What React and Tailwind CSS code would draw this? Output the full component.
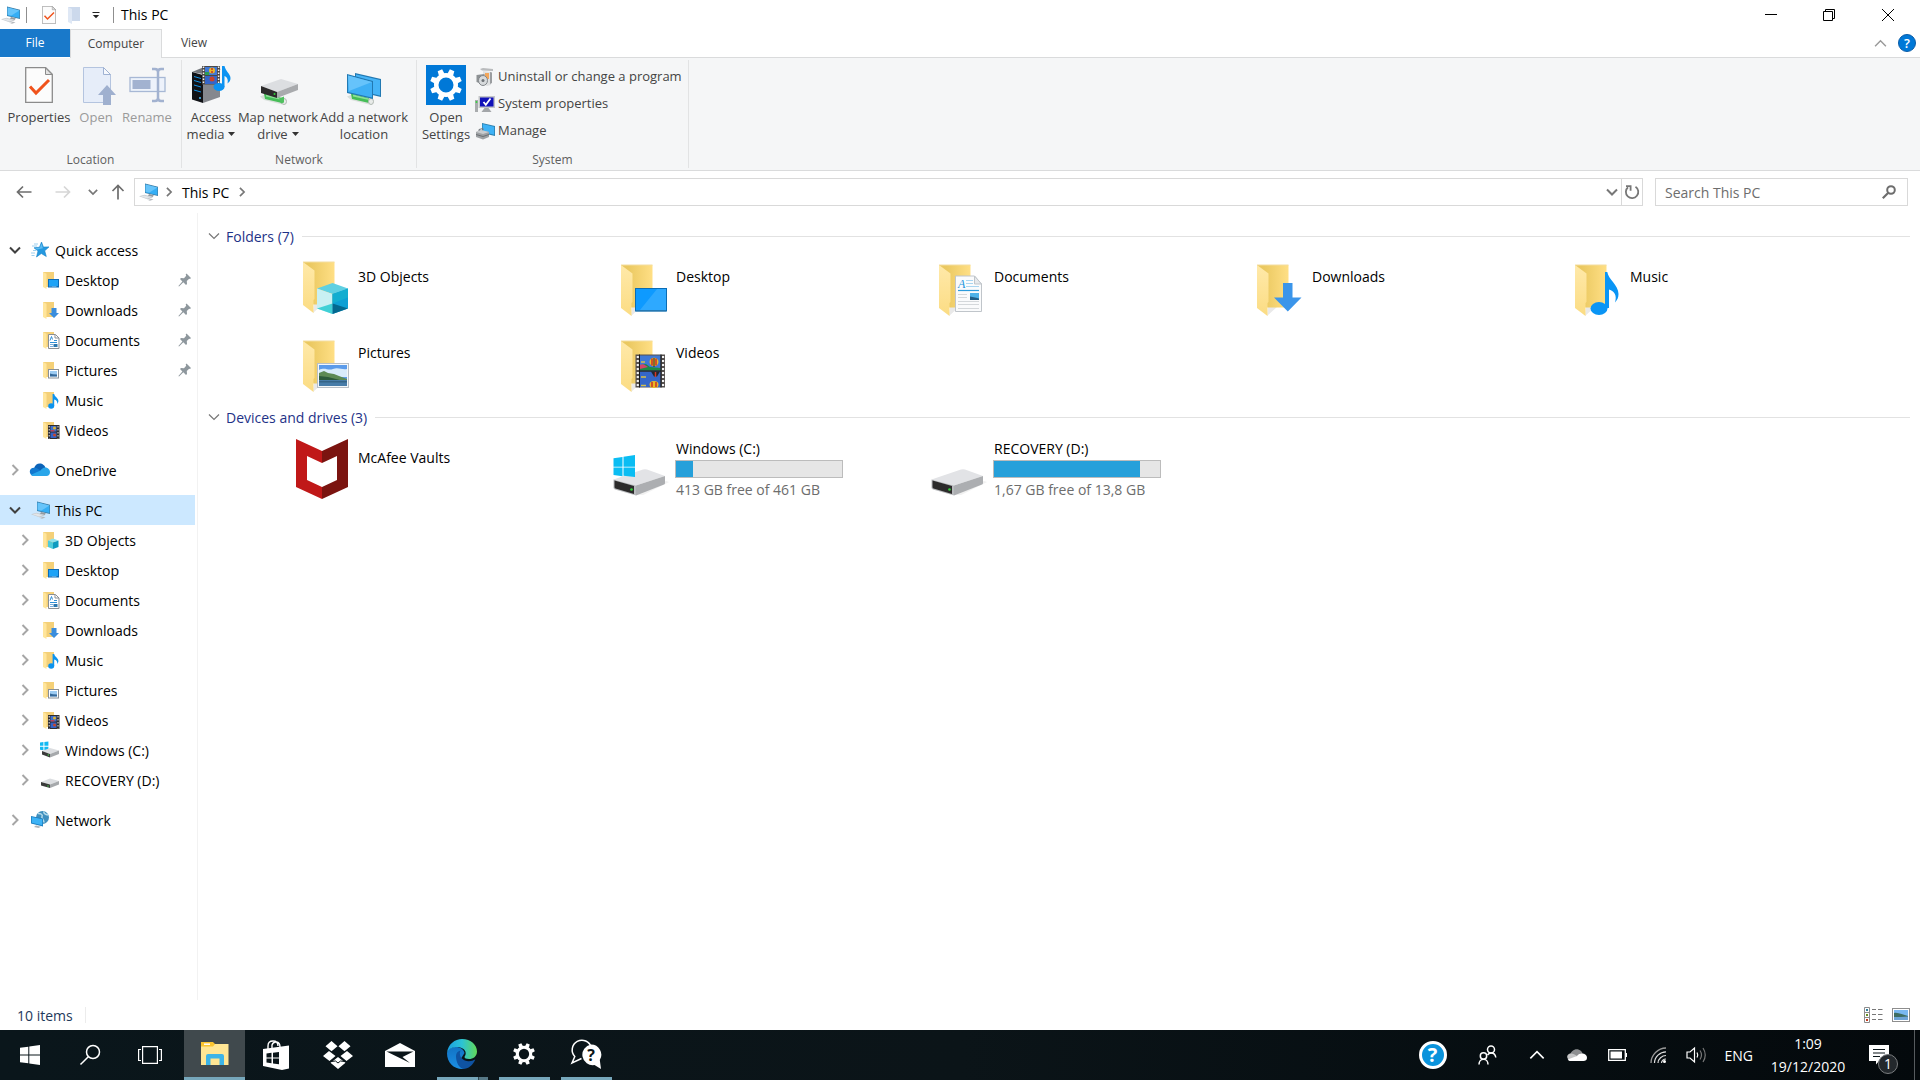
import React from "react";

/* ---------- shared drawings ---------- */

function Chevron({ dir = "down", size = 12, color = "#444", width = 2 }) {
  const d = {
    down: "M1 3.5l5 5 5-5",
    up: "M1 8.5l5-5 5 5",
    right: "M3.5 1l5 5-5 5",
  }[dir];
  return (
    <svg width={size} height={size} viewBox="0 0 12 12" fill="none" stroke={color} strokeWidth={width} aria-hidden="true">
      <path d={d} />
    </svg>
  );
}

function PcIcon() {
  return (
    <svg width="20" height="20" viewBox="0 0 20 20" aria-hidden="true">
      <path d="M7 1.500l13 3.200v9.300L7 11z" fill="#3c7da6" />
      <path d="M7.600 2.600l11.800 3v7.400L7.600 10.400z" fill="#35aef5" />
      <path d="M7.600 2.600l11.800 3-8 5-3.800-.9z" fill="#66c4fa" />
      <path d="M11.500 12l4.500 1.400-1.500 1.600-5-1.500z" fill="#949a9f" />
      <path d="M1 14.200l5.500-1.400 8.500 2.400-5 2.300z" fill="#c5cacf" />
      <path d="M2.500 14.300l4-.9 6 1.800-3.500 1.200z" fill="#e3e6e9" />
      <path d="M10 18l3.200-1.200 2.300.7-3.500 1.300z" fill="#b4b9be" />
    </svg>
  );
}

function SmallFolder({ children }) {
  return (
    <svg width="20" height="20" viewBox="0 0 20 20" aria-hidden="true">
      <path d="M3 2h11v15H5z" fill="#f4d078" />
      <path d="M3 2l3.500 1.800V19L3 17z" fill="#ffe59b" />
      {children}
    </svg>
  );
}

const small = {
  desktop: (
    <SmallFolder>
      <rect x="8" y="9" width="11" height="8.500" fill="#0b6bb8" />
      <rect x="9" y="10" width="9" height="6" fill="#1ea3f7" />
      <path d="M9.500 16.700h1M11.500 16.700h5" stroke="#9ad4fb" strokeWidth=".7" />
    </SmallFolder>
  ),
  downloads: (
    <SmallFolder>
      <path d="M11.500 8h5v5h2.500l-5 5-5-5h2.500z" fill="#3a8ddd" />
    </SmallFolder>
  ),
  documents: (
    <SmallFolder>
      <path d="M8.500 4.500h7l3.500 3.500v10.500H8.500z" fill="#fff" stroke="#8a8f93" />
      <path d="M15 4.500v3.500h4" fill="none" stroke="#8a8f93" />
      <path d="M10 10.500l1.500-4 1 3M10 12.500h7M14 10.500h3" stroke="#2f8fd6" fill="none" />
      <path d="M10 14.500h3M10 16.500h3" stroke="#79aede" />
      <rect x="13.500" y="14" width="4" height="3" fill="#2c77ad" />
    </SmallFolder>
  ),
  pictures: (
    <SmallFolder>
      <rect x="8.500" y="9.500" width="10" height="8.500" fill="#fff" stroke="#8a9197" />
      <rect x="10" y="11" width="7" height="5.500" fill="#9ccbf2" />
      <path d="M10 13.500l3 .8 4 .2v2h-7z" fill="#35699a" />
    </SmallFolder>
  ),
  music: (
    <SmallFolder>
      <ellipse cx="11.200" cy="16" rx="3" ry="2.700" fill="#0c93ee" />
      <path d="M12.600 4h1.600c.4 3 4.600 4 4.200 7.500-.2 1-.5 1.700-1.200 2.500.5-2.500-.8-4-3-4.500V16h-1.600z" fill="#0c93ee" />
    </SmallFolder>
  ),
  videos: (
    <SmallFolder>
      <rect x="8" y="5" width="11.500" height="14" fill="#2e2c2d" />
      <rect x="10.500" y="6" width="6" height="5.500" fill="#3d6fd0" />
      <rect x="10.500" y="12.500" width="6" height="5.500" fill="#3562c4" />
      <path d="M9.200 6v12.500M18 6v12.500" stroke="#e5e5e5" strokeDasharray="1.500 1.500" />
      <circle cx="14.500" cy="8" r="1.500" fill="#e3b52b" />
      <circle cx="14.500" cy="15" r="1.500" fill="#c8452b" />
      <path d="M10.500 10h4v1.500h-4z" fill="#b5465a" />
    </SmallFolder>
  ),
  objects: (
    <SmallFolder>
      <path d="M8 10.500l5-2 5.500 2-5.500 2z" fill="#8fe2ec" />
      <path d="M8 10.500l5 2v6.500l-5-2z" fill="#4fcbd9" />
      <path d="M18.500 10.500l-5.500 2v6.500l5.500-2z" fill="#0f9bc0" />
    </SmallFolder>
  ),
  driveC: (
    <svg width="20" height="20" viewBox="0 0 20 20" aria-hidden="true">
      <path d="M0 2.600l3.400-.5v3.600H0zM4.400 2l4-.6v4.300h-4zM0 6.700h3.400v3.500L0 9.700zM4.400 6.700h4v4.100l-4-.5z" fill="#14b9f2" />
      <path d="M2 11l8-3 9 2.500-9 3.500z" fill="#dcdee1" />
      <path d="M2 11l8 3v3.500l-8-3z" fill="#3a3a3a" />
      <path d="M10 14l9-3.500v3.500l-9 3.500z" fill="#a6a9ac" />
      <circle cx="8.300" cy="15" r=".7" fill="#41d646" />
    </svg>
  ),
  driveD: (
    <svg width="20" height="20" viewBox="0 0 20 20" aria-hidden="true">
      <path d="M1 12l9-3.500 9 2.500-9 3.500z" fill="#dcdee1" />
      <path d="M1 12l9 2.500V18l-9-2.500z" fill="#3a3a3a" />
      <path d="M10 14.500l9-3.500v3.500L10 18z" fill="#a6a9ac" />
      <circle cx="8" cy="16" r=".7" fill="#41d646" />
    </svg>
  ),
  star: (
    <svg width="20" height="20" viewBox="0 0 20 20" aria-hidden="true">
      <path d="M11.500 2l1.900 5 5.600-.1-4.300 3.900 1.600 5.700-5-3-4.800 3.500 1.500-5.900L4 7.800l5.500-.6z" fill="#2499e0" stroke="#1682c8" strokeWidth=".6" />
      <path d="M11.500 3.500l1.400 4.700-6 1.200-1.700-1.200 4.700-.4z" fill="#5cbcf2" />
      <path d="M4 4h4M2 6h5M3 10.500h3M1 13h4M1.500 15.500h3" stroke="#9ccfef" strokeWidth="1" />
    </svg>
  ),
  onedrive: (
    <svg width="22" height="20" viewBox="0 0 22 20" className="-ml-px" aria-hidden="true">
      <path d="M5 8.500C6 4 11 2 14.500 5c1.500 1 2 2.500 2.200 4L8 13z" fill="#0b63b8" />
      <path d="M1.500 14C-.5 10.500 2 7.500 5.500 7.800c2.500 0 4 1.500 6.500 3L5 16c-1.500 0-3-.8-3.500-2z" fill="#1279d0" />
      <path d="M16 7.500c2.500-.3 5 2 5 4.500S19.500 16 17.500 16H5c-1.200 0-2.300-.4-3-1.200l9.500-4.300c1.300-1.800 2.600-2.700 4.500-3z" fill="#29a6ea" />
    </svg>
  ),
  network: (
    <svg width="20" height="20" viewBox="0 0 20 20" aria-hidden="true">
      <circle cx="12.500" cy="7.500" r="6.500" fill="#3f8fbe" />
      <path d="M8 3.500c3 0 5 1 4 3s2 3 2 6M14 1.500c-1 2 2 3 4 3.500" stroke="#b7dceb" strokeWidth="1.500" fill="none" />
      <path d="M1 6l12 2.500v8L1 13.500z" fill="#1d7fc0" />
      <path d="M1.800 7l10.400 2.200v6.100L1.800 12.800z" fill="#3db3f6" />
      <path d="M6 15.500l5 1.200-2.500 1.300-4.500-1z" fill="#aeb4b9" />
    </svg>
  ),
  pc: <PcIcon />,
};

/* ---------- large tile drawings ---------- */

function BigFolder({ children, top = 0 }) {
  return (
    <svg width="60" height="60" viewBox="0 0 60 60" aria-hidden="true">
      <defs>
        <linearGradient id="folder-back" x1="0" x2="1">
          <stop offset=".2" stopColor="#eac860" />
          <stop offset="1" stopColor="#ffdf85" />
        </linearGradient>
        <linearGradient id="folder-front" x1="0" x2="0" y1="0" y2="1">
          <stop offset="0" stopColor="#ffe9a9" />
          <stop offset="1" stopColor="#fbdc83" />
        </linearGradient>
      </defs>
      <g transform={`translate(0 ${top})`}>
        <path d="M18 58l1-9h9z" fill="#e9e9e9" />
        <path d="M8 7h31.500v42.500H18z" fill="url(#folder-back)" />
        <path d="M8 7l11.500 8.500V44l-1 1v13L8 50z" fill="url(#folder-front)" />
        <path d="M8 7h31.500" stroke="#f3dda0" />
      </g>
      {children}
    </svg>
  );
}

const big = {
  objects: (
    <BigFolder top={-3}>
      <path d="M22 30.500L37.500 25 53 30.500 37.500 36z" fill="#5fd0e2" />
      <path d="M22 30.500L37.500 36v20L22 50.500z" fill="#c9f0f3" />
      <path d="M53 30.500L37.500 36v20L53 50.500z" fill="#0d9fd4" />
      <path d="M22 50.500l15.500-5V56z" fill="#3fd0d6" />
      <path d="M53 50.500l-15.500-5V56z" fill="#03688f" />
      <path d="M37.500 36L53 30.500v9l-15.500 6z" fill="#12add0" />
    </BigFolder>
  ),
  desktop: (
    <BigFolder>
      <rect x="22" y="30" width="32" height="23.500" fill="#0a6cb4" />
      <rect x="23" y="31" width="30" height="21" fill="#0e9aff" />
      <path d="M44 31h9v21H27z" fill="#2ea9ff" />
      <path d="M23 53h30" stroke="#3f86b5" />
    </BigFolder>
  ),
  documents: (
    <BigFolder>
      <path d="M24.500 18h19l7 8v27.500h-26z" fill="#fafbfc" stroke="#c0c5ca" />
      <path d="M43.500 18v8h7z" fill="#e6e9ec" stroke="#c0c5ca" />
      <text x="27" y="30" fontFamily="Liberation Serif, serif" fontStyle="italic" fontSize="12" fill="#2194dc">A</text>
      <path d="M35 22.500h7M35 25.500h7M35 28.500h13" stroke="#a9d5f0" />
      <path d="M27 32.500h21" stroke="#2c9bdc" strokeWidth="1.200" />
      <path d="M27 36.500h9M27 39.500h9M27 43.500h21M27 46.500h21M27 50.500h21" stroke="#d4d8db" />
      <rect x="39" y="35" width="9" height="7" fill="#4fb2e8" />
      <path d="M39 38.500l5 1 4 1V42h-9z" fill="#215e86" />
    </BigFolder>
  ),
  downloads: (
    <BigFolder>
      <path d="M34 25H43.500V39.500h9L38.800 53.500 25 39.500h9z" fill="#3b95ea" />
    </BigFolder>
  ),
  music: (
    <BigFolder>
      <ellipse cx="32" cy="50.500" rx="8.500" ry="6.500" fill="#0a95f5" />
      <path d="M38.500 14h1.800c.8 7 11.200 13 11.200 22 0 3.500-1.200 6-3.500 8.500 2.200-7-.5-11.500-6-13V50H38V14z" fill="#0a95f5" />
    </BigFolder>
  ),
  pictures: (
    <BigFolder>
      <rect x="22.500" y="29.500" width="31" height="24" fill="#f4f7f9" stroke="#b8bfc5" />
      <rect x="24" y="31" width="28" height="21" fill="#5b9bea" />
      <path d="M24 36c6-3 9 1 14-1s9 1 14 0v8H24z" fill="#d9ecfb" />
      <path d="M24 39l5-2 4 2 6 1 5 2 8 3v1H24z" fill="#5d8a55" />
      <path d="M24 46h28v6H24z" fill="#477ca8" />
      <path d="M24 42l9 1 12 3H24z" fill="#2d5a3c" />
      <path d="M24 47h28v1.500H24z" fill="#356487" />
    </BigFolder>
  ),
  videos: (
    <BigFolder>
      <rect x="22.500" y="20.500" width="29.500" height="33" fill="#55504e" />
      <rect x="27" y="21.500" width="20.500" height="15" fill="#3f78d6" />
      <rect x="27" y="37.500" width="20.500" height="15.500" fill="#3566c9" />
      <path d="M24.800 22v31M50 22v31" stroke="#f2f2f2" strokeWidth="2.200" strokeDasharray="2 2" />
      <path d="M27 31l6-1 4 3 10.500 1v2.500H27z" fill="#1d8a45" />
      <path d="M27 31c3-2 5 0 8 2l-8 2z" fill="#d2446d" />
      <ellipse cx="41" cy="28" rx="4.500" ry="4.200" fill="#e9b824" />
      <path d="M39 24.500v7M43 24.500v7" stroke="#c92f27" strokeWidth="1.500" />
      <path d="M41 24v9" stroke="#22262f" />
      <path d="M38 37.500h9l-3 5h-3z" fill="#22262f" />
      <path d="M42.500 38v5" stroke="#d03a2b" strokeWidth="1.500" />
      <ellipse cx="41" cy="50.500" rx="4.500" ry="3.500" fill="#e9b824" />
      <path d="M39 48v5M43 48v5" stroke="#c92f27" strokeWidth="1.500" />
      <path d="M28 28h4M28 43h5M28 51.500h5" stroke="#d6c04b" strokeWidth="1.500" />
      <path d="M26.500 20.500v33M48 20.500v33M27 37h21" stroke="#17181a" />
    </BigFolder>
  ),
  mcafee: (
    <svg width="60" height="60" viewBox="0 0 60 60" aria-hidden="true">
      <path d="M2 0l26 12v12L13 17v24l15 7v12L2 48z" fill="#c01818" />
      <path d="M54 0L28 12v12l15-7v24l-15 7v12l26-12z" fill="#7b1410" />
    </svg>
  ),
  driveC: (
    <svg width="60" height="60" viewBox="0 0 60 60" aria-hidden="true">
      <BigDrive />
      <path d="M1.500 4.200l9-1.300v9.800h-9zM11.500 2.800L23 1v11.700H11.500zM1.500 13.500h9v8.700l-9-1.200zM11.500 13.500H23V23l-11.500-1.300z" transform="translate(0 15)" fill="#0abdf3" />
    </svg>
  ),
  driveD: (
    <svg width="60" height="60" viewBox="0 0 60 60" aria-hidden="true">
      <BigDrive />
    </svg>
  ),
};

function BigDrive() {
  return (
    <g>
      <path d="M24 56l30-14 3 1-26 13z" fill="#f1f1f1" />
      <path d="M1.500 40.500L31 30.500q2-.6 4 0L53 37 24 46.500z" fill="#e2e3e6" />
      <path d="M1.500 40.500L24 46.500v10l-21-6q-1.500-.5-1.500-2z" fill="#b9bbbe" />
      <path d="M2.500 41.500L22 47v8L3.500 49.500q-1-.4-1-1.500z" fill="#2c2b2b" />
      <path d="M24 46.500L53 37v7q0 1-1 1.500L24 56.500z" fill="#acaeb1" />
      <circle cx="19.500" cy="50.500" r="1.300" fill="#35d13c" />
    </g>
  );
}

/* ---------- ribbon drawings ---------- */

function PageCheck({ w, h }) {
  return (
    <svg width={w} height={h} viewBox="0 0 28 36" aria-hidden="true">
      <path d="M.7.700h20l6.600 6.600v28H.7z" fill="#fcfcfc" stroke="#8b8b8b" strokeWidth="1.300" />
      <path d="M20.500 1v6.500H27z" fill="#e3e3e3" stroke="#8b8b8b" />
      <path d="M5 19.500l6 6.500L24 13" fill="none" stroke="#f0531c" strokeWidth="3" />
    </svg>
  );
}

function NetPipe() {
  return (
    <g>
      <path d="M2 33.500l7-3 19 6-4 5-18-4.500z" fill="#d9dfdb" />
      <path d="M6 30.500l18 4.500v5L7 36z" fill="#45bd57" />
      <path d="M8 31.500l16 4v1.500L8 33.500z" fill="#8be096" />
      <ellipse cx="26" cy="38.500" rx="2.500" ry="3" fill="#e8ebe9" stroke="#b0b8b2" />
    </g>
  );
}

const ribbonIcons = {
  properties: <PageCheck w={28} h={36} />,
  open: (
    <svg width="40" height="40" viewBox="0 0 40 40" aria-hidden="true">
      <path d="M7.500 2.500h20l7 7v28h-27z" fill="#e6edf9" stroke="#b4c4df" />
      <path d="M27.500 2.500v7h7z" fill="#f7f9fd" stroke="#9fb2d3" />
      <path d="M31 20l9 10h-5v10h-8V30h-5z" fill="#9fb0cf" />
    </svg>
  ),
  rename: (
    <svg width="40" height="40" viewBox="0 0 40 40" aria-hidden="true">
      <rect x="3" y="12.500" width="35" height="14" fill="#edf2fb" stroke="#a7b8d5" strokeWidth="1.300" />
      <rect x="5.500" y="15" width="18" height="9" fill="#a2b2d0" />
      <path d="M25 4h3q3 0 3 3v26q0 3 3 3h3M37 4h-3q-3 0-3 3M25 36h3q3 0 3-3" fill="none" stroke="#a2b2d0" strokeWidth="2.500" />
    </svg>
  ),
  media: (
    <svg width="40" height="40" viewBox="0 0 40 40" aria-hidden="true">
      <path d="M1 7l12-5 17 2-13 6z" fill="#74777c" />
      <path d="M1 7l11 3v28L1 34.500z" fill="#101216" />
      <path d="M12 10l17-4v26l-17 6z" fill="#85888e" />
      <path d="M3 11.500l7 2M3 15.500l7 2M3 20l7 2M3 25l7 2" stroke="#1492e6" />
      <circle cx="9" cy="33" r="1" fill="#4cc0ff" />
      <rect x="11" y="1" width="18" height="18.500" fill="#4b4847" />
      <rect x="14" y="2" width="12" height="8" fill="#3f78d6" />
      <rect x="14" y="11" width="12" height="8" fill="#3566c9" />
      <path d="M12.500 1.500v18M27.600 1.500v18" stroke="#f2f2f2" strokeWidth="1.500" strokeDasharray="1.500 1.500" />
      <circle cx="21" cy="5.500" r="3" fill="#e9b824" />
      <path d="M20 4h2M20 7h2" stroke="#c92f27" strokeWidth="1.500" />
      <circle cx="21" cy="14" r="2.500" fill="#c9432a" />
      <path d="M14 7h4v3h-4z" fill="#2b9d55" />
      <ellipse cx="28" cy="22" rx="5.500" ry="4" fill="#0c93f2" />
      <path d="M31 1h2.500c1 5 6 8 6 12 0 2.500-1 4-3 5.500 1-4-.5-6.500-3-7.500V22H31z" fill="#0c93f2" />
    </svg>
  ),
  drive: (
    <svg width="40" height="40" viewBox="0 0 40 40" aria-hidden="true">
      <g transform="translate(0 -2)"><NetPipe /></g>
      <path d="M3 21l20-7 17 5-21 8z" fill="#dcdee1" />
      <path d="M3 21l16 6v6L3 28z" fill="#2c2b2b" />
      <path d="M19 27l21-8v6l-21 8z" fill="#a9abae" />
      <circle cx="16.500" cy="29" r="1" fill="#35d13c" />
      <path d="M21 33.500l5-2v6l-3 1z" fill="#4fc05f" />
    </svg>
  ),
  location: (
    <svg width="40" height="40" viewBox="0 0 40 40" aria-hidden="true">
      <g transform="translate(1 -2)"><NetPipe /></g>
      <path d="M11 8l26 6v18L11 26z" fill="#2279b2" />
      <path d="M12 9.500l24 5.500v15.500L12 25z" fill="#46b4f7" />
      <path d="M3 9l26 7v18L3 28z" fill="#2279b2" />
      <path d="M4 10.500l24 6.400v15.600L4 27z" fill="#3eaff5" />
      <path d="M4 10.500l24 6.400L5 26z" fill="#66c3fb" />
    </svg>
  ),
};

function Gear({ size, color, inner }) {
  const teeth = [0, 45, 90, 135, 180, 225, 270, 315];
  return (
    <svg width={size} height={size} viewBox="0 0 32 32" aria-hidden="true">
      {teeth.map((a) => (
        <path key={a} d="M13 5l.6-5h4.800l.6 5z" fill={color} transform={`rotate(${a + 22.5} 16 16)`} />
      ))}
      <circle cx="16" cy="16" r={(12 + inner) / 2} fill="none" stroke={color} strokeWidth={12 - inner} />
    </svg>
  );
}

function UninstallIcon() {
  return (
    <svg width="20" height="20" viewBox="0 0 20 20" aria-hidden="true">
      <path d="M5 2l3-1 10 1v2L7 3.500z" fill="#b9bbbd" />
      <path d="M8 4l8 1v13l-4 1-4-2z" fill="#dfe1e2" />
      <path d="M15 5l2 .5V16l-2 1z" fill="#9a9da0" />
      <path d="M10 6h4v6h-4z" fill="#f3a65a" />
      <path d="M1.500 8l8-1v11l-8-3z" fill="#8d9194" />
      <ellipse cx="8" cy="13.500" rx="4.500" ry="5" fill="#d7dadc" stroke="#82878b" />
      <circle cx="8" cy="13.500" r="1.500" fill="#6d7276" />
    </svg>
  );
}

function SystemIcon() {
  return (
    <svg width="20" height="20" viewBox="0 0 20 20" aria-hidden="true">
      <path d="M0 6h3v12H0z" fill="#a9acae" />
      <circle cx="1.500" cy="8" r="1" fill="#36d33b" />
      <rect x="3.500" y="2" width="16.500" height="12" fill="#c3c5c8" />
      <rect x="5" y="3.500" width="13.500" height="9" fill="#1111b9" />
      <path d="M8.500 8l2.300 2.800L15.500 4.500" fill="none" stroke="#fff" strokeWidth="1.800" />
      <path d="M9.500 14h4l3 4h-10z" fill="#a3a6a9" />
    </svg>
  );
}

function ManageIcon() {
  return (
    <svg width="20" height="20" viewBox="0 0 20 20" aria-hidden="true">
      <path d="M7 2l13 3v10L7 12z" fill="#2b7fae" />
      <path d="M7.700 3l11.500 2.700v8.100L7.700 11z" fill="#3eb2f6" />
      <path d="M1 11l5-2 8 2v5l-6 2.500-7-2.500z" fill="#9da1a4" />
      <path d="M1 11l5-2 8 2-6 2z" fill="#c9cccf" />
      <path d="M4 10V8.500l4-1V9" fill="none" stroke="#70757a" />
      <path d="M1 13.500l7 2 6-2" fill="none" stroke="#6b6f73" />
    </svg>
  );
}

/* ---------- data ---------- */

const tree = [
  {
    label: "Quick access", icon: "star", open: true,
    items: [
      { label: "Desktop", icon: "desktop", pin: true },
      { label: "Downloads", icon: "downloads", pin: true },
      { label: "Documents", icon: "documents", pin: true },
      { label: "Pictures", icon: "pictures", pin: true },
      { label: "Music", icon: "music" },
      { label: "Videos", icon: "videos" },
    ],
  },
  { label: "OneDrive", icon: "onedrive", items: [] },
  {
    label: "This PC", icon: "pc", open: true, selected: true,
    items: [
      { label: "3D Objects", icon: "objects", expand: true },
      { label: "Desktop", icon: "desktop", expand: true },
      { label: "Documents", icon: "documents", expand: true },
      { label: "Downloads", icon: "downloads", expand: true },
      { label: "Music", icon: "music", expand: true },
      { label: "Pictures", icon: "pictures", expand: true },
      { label: "Videos", icon: "videos", expand: true },
      { label: "Windows (C:)", icon: "driveC", expand: true },
      { label: "RECOVERY (D:)", icon: "driveD", expand: true },
    ],
  },
  { label: "Network", icon: "network", items: [] },
];

const folders = [
  ["3D Objects", "objects"],
  ["Desktop", "desktop"],
  ["Documents", "documents"],
  ["Downloads", "downloads"],
  ["Music", "music"],
  ["Pictures", "pictures"],
  ["Videos", "videos"],
];

const drives = [
  { label: "Windows (C:)", icon: "driveC", used: 10, free: "413 GB free of 461 GB" },
  { label: "RECOVERY (D:)", icon: "driveD", used: 88, free: "1,67 GB free of 13,8 GB" },
];

/* ---------- window parts ---------- */

function TitleBar() {
  return (
    <header className="flex h-[29px] shrink-0 items-center">
      <PcIcon />
      <span className="ml-1.5 h-4 w-px bg-[#8f8f8f]" />
      <button aria-label="Properties" className="ml-[15px]"><PageCheck w={14} h={18} /></button>
      <button aria-label="New folder" className="ml-3">
        <svg width="12" height="18" viewBox="0 0 12 18" aria-hidden="true">
          <path d="M0 1h12v14H2z" fill="#ccd9ec" />
          <path d="M0 1l4 2v15l-4-2z" fill="#dfe8f5" />
        </svg>
      </button>
      <button aria-label="Customize Quick Access Toolbar" className="ml-3">
        <svg width="8" height="8" viewBox="0 0 8 8" aria-hidden="true">
          <path d="M.5 1.500h7" stroke="#222" />
          <path d="M.8 4h6.400L4 7.200z" fill="#222" />
        </svg>
      </button>
      <span className="ml-[13px] h-4 w-px bg-[#8f8f8f]" />
      <h1 className="ml-[7px] text-[14px] text-black">This PC</h1>
      <div className="ml-auto flex h-full pr-0.5">
        <button aria-label="Minimize" className="grid w-[58px] place-items-center">
          <svg width="12" height="12" viewBox="0 0 12 12" stroke="#000" aria-hidden="true"><path d="M0 5.500h12" /></svg>
        </button>
        <button aria-label="Restore" className="grid w-[58px] place-items-center">
          <svg width="12" height="12" viewBox="0 0 12 12" fill="none" stroke="#000" aria-hidden="true">
            <path d="M.5 2.500h9v9h-9zM2.500 2.500v-2h9v9h-2" />
          </svg>
        </button>
        <button aria-label="Close" className="grid w-[60px] place-items-center">
          <svg width="12" height="12" viewBox="0 0 12 12" stroke="#000" aria-hidden="true"><path d="M0 0l12 12M12 0L0 12" /></svg>
        </button>
      </div>
    </header>
  );
}

function Tabs() {
  return (
    <div className="flex h-[29px] shrink-0 text-[12px] text-[#444]">
      <button className="mb-px w-[70px] bg-[#1979ca] text-white">File</button>
      <button className="w-[92px] border border-b-0 border-[#dadbdc] bg-[#f5f6f7]">Computer</button>
      <button className="w-16 border-b border-[#dadbdc]">View</button>
      <div className="flex flex-1 items-center justify-end gap-[11px] border-b border-[#dadbdc] pr-1">
        <button aria-label="Minimize the Ribbon"><Chevron dir="up" size={13} color="#999" width={1.3} /></button>
        <button aria-label="Help" className="grid size-[18px] place-items-center rounded-full border border-[#0a5ca8] bg-[#0078d7] text-[13px] font-semibold leading-none text-white">?</button>
      </div>
    </div>
  );
}

function BigButton({ icon, lines, width, disabled, caret }) {
  return (
    <button disabled={disabled} className={`flex shrink-0 flex-col items-center pt-[5px] ${width} ${disabled ? "text-[#9a9a9a]" : "text-[#444]"}`}>
      <span className="flex h-10 items-center justify-center">{icon}</span>
      {lines.map((line, i) => (
        <span key={line} className={`flex items-center gap-1 whitespace-nowrap leading-[17px] ${i === 0 ? "mt-1" : ""}`}>
          {line}
          {caret && i === lines.length - 1 && (
            <svg width="7" height="5" viewBox="0 0 7 5" aria-hidden="true"><path d="M0 0h7L3.500 4z" fill="#333" /></svg>
          )}
        </span>
      ))}
    </button>
  );
}

function Group({ name, children, className }) {
  return (
    <section aria-label={name} className={`my-0.5 flex flex-col justify-between border-r border-[#e2e3e4] ${className}`}>
      <div className="flex pl-1">{children}</div>
      <div className="text-center text-[12px] leading-[17px] text-[#5f5f5f]">{name}</div>
    </section>
  );
}

function SmallButton({ icon, children }) {
  return (
    <button className="flex h-[27px] items-center gap-[3px] whitespace-nowrap">
      {icon}
      {children}
    </button>
  );
}

function Ribbon() {
  return (
    <div className="flex h-[113px] shrink-0 border-b border-[#dadbdc] bg-[#f5f6f7] text-[13px] text-[#444]">
      <Group name="Location" className="w-[182px]">
        <BigButton icon={ribbonIcons.properties} lines={["Properties"]} width="w-[70px]" />
        <BigButton icon={ribbonIcons.open} lines={["Open"]} width="w-[44px]" disabled />
        <BigButton icon={ribbonIcons.rename} lines={["Rename"]} width="w-[58px]" disabled />
      </Group>
      <Group name="Network" className="w-[235px]">
        <BigButton icon={ribbonIcons.media} lines={["Access", "media"]} width="w-[50px]" caret />
        <BigButton icon={ribbonIcons.drive} lines={["Map network", "drive"]} width="w-[84px]" caret />
        <BigButton icon={ribbonIcons.location} lines={["Add a network", "location"]} width="w-[88px]" />
      </Group>
      <Group name="System" className="w-[272px]">
        <BigButton
          icon={<span className="grid size-10 place-items-center bg-[#0078d7]"><Gear size={32} color="#fff" inner={7.5} /></span>}
          lines={["Open", "Settings"]}
          width="w-[50px]"
        />
        <div className="flex flex-col pl-1 pt-[3px]">
          <SmallButton icon={<UninstallIcon />}>Uninstall or change a program</SmallButton>
          <SmallButton icon={<SystemIcon />}>System properties</SmallButton>
          <SmallButton icon={<ManageIcon />}>Manage</SmallButton>
        </div>
      </Group>
    </div>
  );
}

function Arrow({ color, rotate }) {
  return (
    <svg width="16" height="16" viewBox="0 0 16 16" fill="none" stroke={color} strokeWidth="1.700" className={rotate} aria-hidden="true">
      <path d="M15.500 8H1.500M7 2.500L1.500 8 7 13.500" />
    </svg>
  );
}

function AddressBar() {
  return (
    <div className="flex h-[42px] shrink-0 items-center pr-3">
      <nav aria-label="History" className="flex w-[134px] items-center pl-4">
        <button aria-label="Back"><Arrow color="#6d6d6d" /></button>
        <button aria-label="Forward" className="ml-[23px]" disabled><Arrow color="#d6d6d6" rotate="rotate-180" /></button>
        <button aria-label="Recent locations" className="ml-[17px]"><Chevron size={10} color="#777" width={2} /></button>
        <button aria-label="Up" className="ml-3"><Arrow color="#6d6d6d" rotate="rotate-90" /></button>
      </nav>
      <div className="flex h-7 flex-1 items-center border border-[#d9d9d9] pl-[3px] text-[14px] text-black">
        <PcIcon />
        <span className="ml-1.5"><Chevron dir="right" size={10} color="#777" width={2} /></span>
        <button className="ml-2">This PC</button>
        <span className="ml-2"><Chevron dir="right" size={10} color="#777" width={2} /></span>
        <button aria-label="Previous locations" className="ml-auto mr-[3px]"><Chevron color="#777" width={2} /></button>
        <button aria-label="Refresh" className="grid h-full w-[21px] place-items-center border-l border-[#d9d9d9]">
          <svg width="16" height="16" viewBox="0 0 16 16" fill="none" stroke="#777" strokeWidth="1.800" aria-hidden="true">
            <path d="M11.500 2.700A6.200 6.200 0 1 1 4 3.200" />
            <path d="M2 2.200h4.600v4.500" />
          </svg>
        </button>
      </div>
      <label className="ml-3 flex h-7 w-[253px] items-center border border-[#d9d9d9] pl-[9px] pr-[11px]">
        <input aria-label="Search This PC" placeholder="Search This PC" className="min-w-0 flex-1 bg-transparent text-[14px] outline-none placeholder:text-[#6d6d6d]" />
        <svg width="14" height="14" viewBox="0 0 14 14" fill="none" stroke="#6d6d6d" aria-hidden="true">
          <circle cx="9" cy="5" r="3.800" strokeWidth="2" />
          <path d="M6.300 7.700L.8 13.200" strokeWidth="2.200" />
        </svg>
      </label>
    </div>
  );
}

function Pin() {
  return (
    <svg width="14" height="14" viewBox="0 0 14 14" className="ml-auto mr-[3px]" aria-hidden="true">
      <path d="M8.500.500l4.500 4.500-1 1-.8-.3-2.400 2.400.2 2.900-1 1-2.700-2.700L1 13.600l-.6-.6 4-4.500L2 6l1-1 3 .2L8.200 2.800 7.700 1.500z" fill="#8e979d" />
    </svg>
  );
}

function TreeRow({ node, level }) {
  const expandable = level === 0 || node.expand;
  return (
    <button
      className={`flex h-[30px] w-[195px] shrink-0 items-center text-left ${level ? "pl-[10px]" : ""} ${node.selected ? "bg-[#cce8ff]" : ""}`}
    >
      <span className="grid w-[30px] place-items-center">
        {expandable && (node.open ? <Chevron size={12} color="#404040" width={2} /> : <Chevron dir="right" size={12} color="#a6a6a6" width={2} />)}
      </span>
      <span className="w-5">{small[node.icon]}</span>
      <span className="ml-[5px]">{node.label}</span>
      {node.pin && <Pin />}
    </button>
  );
}

function NavPane() {
  return (
    <aside className="flex w-[198px] shrink-0 flex-col gap-2.5 border-r border-[#f2f2f2] pt-[22px] text-[14px] text-black">
      {tree.map((node) => (
        <div key={node.label} className="flex flex-col">
          <TreeRow node={node} level={0} />
          {node.items.map((item) => (
            <TreeRow key={item.label} node={item} level={1} />
          ))}
        </div>
      ))}
    </aside>
  );
}

function SectionHeader({ children }) {
  return (
    <h2 className="flex h-6 items-center text-[14px] text-[#1e3287]">
      <Chevron size={12} color="#777" width={1.2} />
      <span className="ml-1.5">{children}</span>
      <span className="ml-2 h-px flex-1 bg-[#e2e2e2]" />
    </h2>
  );
}

function Content() {
  return (
    <main className="min-w-0 flex-1 pl-2.5 pr-2.5 pt-[11px] text-[14px] text-black">
      <SectionHeader>Folders (7)</SectionHeader>
      <div className="grid grid-cols-[repeat(auto-fill,318px)] pl-20 pt-px">
        {folders.map(([label, icon]) => (
          <button key={label} className="flex h-[76px] pl-[7px] pt-[9px] text-left">
            {big[icon]}
            <span className="ml-[3px] mt-[9px] leading-5">{label}</span>
          </button>
        ))}
      </div>
      <div className="mt-1">
        <SectionHeader>Devices and drives (3)</SectionHeader>
      </div>
      <div className="grid grid-cols-[repeat(auto-fill,318px)] pl-20 pt-[10px]">
        <button className="flex pl-1.5 text-left">
          {big.mcafee}
          <span className="ml-1 mt-[9px] leading-5">McAfee Vaults</span>
        </button>
        {drives.map((d) => (
          <button key={d.label} className="flex pl-1.5 text-left">
            {big[d.icon]}
            <span className="ml-[3px] flex flex-col">
              <span className="pl-px leading-5">{d.label}</span>
              <span
                role="progressbar"
                aria-label={`${d.label} used space`}
                aria-valuenow={d.used}
                className="mt-px flex h-[18px] w-[168px] border border-[#bcbcbc] bg-[#e6e6e6]"
              >
                <span className="bg-[#26a0da]" style={{ width: `${d.used}%` }} />
              </span>
              <span className="mt-0.5 pl-px leading-5 text-[#6d6d6d]">{d.free}</span>
            </span>
          </button>
        ))}
      </div>
    </main>
  );
}

function StatusBar() {
  return (
    <footer className="flex h-[30px] shrink-0 items-center pl-[17px] pr-2.5 text-[14px] text-[#1e395b]">
      <span>10 items</span>
      <span className="ml-3 h-4 w-px bg-[#ececec]" />
      <button aria-label="Details view" className="ml-auto">
        <svg width="19" height="16" viewBox="0 0 19 16" aria-hidden="true">
          <path d="M.5.500h5v15h-5zM.5 5.500h5M.5 10.500h5" fill="none" stroke="#8d8d8d" />
          <path d="M8 2.500h4M14 2.500h4.500M8 7.500h4M14 7.500h4.500M8 12.500h4M14 12.500h4.500" stroke="#777" />
          <path d="M2 2h2v2H2z" fill="#2f7f9d" />
          <path d="M2 7h2v2H2z" fill="#6a8f25" />
          <path d="M2 12h2v2H2z" fill="#c23a1e" />
        </svg>
      </button>
      <button aria-label="Large icons view" className="ml-[9px]">
        <svg width="18" height="14" viewBox="0 0 18 14" aria-hidden="true">
          <rect x=".5" y=".5" width="17" height="13" fill="#fff" stroke="#8d8d8d" />
          <rect x="2" y="2" width="14" height="10" fill="#79b8f0" />
          <path d="M2 5c4-1 9 2 14 3v4H2z" fill="#3f6e62" />
          <path d="M2 9c5 0 9 0 14-.5V12H2z" fill="#6ea4d6" />
        </svg>
      </button>
    </footer>
  );
}

/* ---------- taskbar ---------- */

const taskIcons = {
  start: (
    <svg width="20" height="20" viewBox="0 0 20 20" fill="#fff" aria-hidden="true">
      <path d="M0 2.800l8.300-1.100v7.800H0zM9.300 1.500L20 0v9.500H9.300zM0 10.500h8.300v7.800L0 17.200zM9.300 10.500H20V20L9.300 18.500z" />
    </svg>
  ),
  search: (
    <svg width="22" height="22" viewBox="0 0 22 22" fill="none" stroke="#fff" strokeWidth="1.500" aria-hidden="true">
      <circle cx="14" cy="8" r="6.500" />
      <path d="M9.300 12.700L1.500 20.500" />
    </svg>
  ),
  taskview: (
    <svg width="24" height="20" viewBox="0 0 24 20" fill="none" stroke="#fff" strokeWidth="1.200" aria-hidden="true">
      <path d="M4.600 1.600h14.800v16.800H4.600zM3 4.500H.6v11H3M21 4.500h2.400v11H21" />
    </svg>
  ),
  explorer: (
    <svg width="28" height="24" viewBox="0 0 28 24" aria-hidden="true">
      <path d="M0 0h12l2 2v4H0z" fill="#fbc42f" />
      <path d="M0 4.500h12l2-2.500h13.500v21H0z" fill="#ffe694" />
      <path d="M3 2.200h6" stroke="#fff" strokeWidth="1.500" />
      <path d="M5 23v-9q0-2 2-2h14q2 0 2 2v9h-4.500v-6.500h-9V23z" fill="#3db4e7" />
    </svg>
  ),
  store: (
    <svg width="28" height="30" viewBox="0 0 28 30" aria-hidden="true">
      <path d="M6 9V6q0-5 5-5t5 5M10 8V5q1-3.500 4.500-3T18 7" fill="none" stroke="#fff" strokeWidth="1.400" />
      <path d="M1 9l26-3.500v23L20 30 1 26z" fill="#fff" />
      <path d="M4.500 13.500l5-.7v4.700h-5zM11 12.700l6-.8v5.600h-6zM4.500 18.500h5v4.700l-5-.7zM11 18.500h6v5.700l-6-.8z" fill="#0a1519" />
    </svg>
  ),
  dropbox: (
    <svg width="30" height="28" viewBox="0 0 30 28" fill="#fff" aria-hidden="true">
      <path d="M8.500 0l6 5.200-6 5-6-5zM21.500 0l6 5.200-6 5-6-5zM6 10l6.500 5L6.500 20 0 15zM24 10l-6.500 5 6 5 6.500-5zM7.500 21.800l1.800-1.300L15 16l5.700 4.500 1.800 1.300L15 28z" />
      <path d="M8 20.500l4.500-.500 2.500 2 2.500-2 4.500.5" fill="none" stroke="#0a1519" />
    </svg>
  ),
  mail: (
    <svg width="30" height="24" viewBox="0 0 30 24" aria-hidden="true">
      <path d="M0 8L15 0l15 8v16H0z" fill="#fff" />
      <path d="M1.500 8.500h27l-11 5.500 7.500 6z" fill="#0a1519" />
    </svg>
  ),
  edge: (
    <svg width="30" height="30" viewBox="0 0 30 30" aria-hidden="true">
      <defs>
        <linearGradient id="edge-top" x1="0" x2="1">
          <stop offset="0" stopColor="#1a9fe0" />
          <stop offset=".5" stopColor="#2cc3d5" />
          <stop offset="1" stopColor="#62d957" />
        </linearGradient>
        <linearGradient id="edge-left" x1="0" x2="0" y1="0" y2="1">
          <stop offset="0" stopColor="#1273c4" />
          <stop offset="1" stopColor="#1b8fe4" />
        </linearGradient>
      </defs>
      <path d="M0 14c1-4 5-6.500 10-6 4 .4 7 3 7.500 6l-5 8 4 7.900C7 30.500 0 24 0 14z" fill="url(#edge-left)" />
      <path d="M9 17c0-3 2-5 4.500-5.500-2 4 .5 9.500 6.500 10.500 3.500.6 6-.5 8.300-1.500C26 26 21.500 30 16 30c-4-1.500-7-6.500-7-13z" fill="#0f53a2" />
      <path d="M0 14C1 5 8 0 15 0c9 0 15 6 15 12.500 0 5-4 7.500-8 7.500-3 0-4.500-1-4.500-2 0-.8 1.200-1.600 1.200-3.800C18.700 10.500 14.500 8 10 8c-4.500 0-8.500 2-10 6z" fill="url(#edge-top)" />
    </svg>
  ),
  settings: <Gear size={22} color="#fff" inner={7.5} />,
  help: (
    <svg width="32" height="32" viewBox="0 0 32 32" aria-hidden="true">
      <path d="M11.500 20.500L2 25l2.800-6.500A9.700 9.700 0 1 1 21.300 9.500" fill="none" stroke="#fff" strokeWidth="1.500" />
      <path d="M21 6.500a10.200 10.200 0 0 1 8.800 15.500L31 31l-6.500-4A10.200 10.200 0 1 1 21 6.500z" fill="#fff" />
      <text x="21" y="22.500" textAnchor="middle" fontFamily="Open Sans, sans-serif" fontWeight="700" fontSize="16" fill="#0a1519">?</text>
    </svg>
  ),
};

function TaskButton({ label, icon, width = "w-[62px]", active, running, stacked }) {
  return (
    <button aria-label={label} className={`flex h-full flex-col items-center ${width} ${active ? "bg-[#40494d]" : ""}`}>
      <span className="grid flex-1 place-items-center">{icon}</span>
      {active && <span className="h-[3px] w-full bg-[#76a7bb]" />}
      {running && (
        <span className="flex h-[3px] w-[51px] bg-[#76a7bb]">
          {stacked && <span className="ml-auto w-2.5 border-l border-[#2d4650] bg-[#567886]" />}
        </span>
      )}
    </button>
  );
}

function Taskbar() {
  return (
    <div className="flex h-[50px] shrink-0 items-center bg-linear-to-r from-[#0a161b] via-[#0b1418] to-[#04090c] text-white">
      <div className="flex h-full">
        <TaskButton label="Start" icon={taskIcons.start} width="w-[60px]" />
        <TaskButton label="Search" icon={taskIcons.search} width="w-[60px]" />
        <TaskButton label="Task View" icon={taskIcons.taskview} width="w-[60px]" />
      </div>
      <div className="ml-1 flex h-full">
        <TaskButton label="File Explorer" icon={taskIcons.explorer} width="w-[61px]" active />
        <TaskButton label="Microsoft Store" icon={taskIcons.store} />
        <TaskButton label="Dropbox" icon={taskIcons.dropbox} />
        <TaskButton label="Mail" icon={taskIcons.mail} />
        <TaskButton label="Microsoft Edge" icon={taskIcons.edge} running stacked />
        <TaskButton label="Settings" icon={taskIcons.settings} running />
        <TaskButton label="Get Help" icon={taskIcons.help} running />
      </div>
      <div className="ml-auto flex h-full items-center text-[14px]">
        <button aria-label="Support" className="grid size-7 place-items-center rounded-full border-[3px] border-white bg-[#0a93dc] text-[20px] font-bold leading-none">?</button>
        <button aria-label="People" className="ml-[30px]">
          <svg width="20" height="20" viewBox="0 0 20 20" fill="none" stroke="#fff" strokeWidth="1.500" aria-hidden="true">
            <circle cx="14" cy="4.500" r="3.500" />
            <circle cx="6.500" cy="11" r="3.200" />
            <path d="M2 19.500c0-3 2-5.200 4.500-5.200s4.500 2.200 4.500 5.200M10.500 10c1-1.300 2-2 3.500-2 2.800 0 4.500 1.800 4.800 4.500" />
          </svg>
        </button>
        <button aria-label="Show hidden icons" className="ml-8"><Chevron dir="up" size={16} color="#fff" width={1.2} /></button>
        <button aria-label="OneDrive" className="ml-[21px]">
          <svg width="22" height="14" viewBox="0 0 22 14" aria-hidden="true">
            <path d="M4 7C5 2 11-1 15 3c1 1 1.500 2 1.800 3.500L8 11z" fill="#8d8f91" />
            <path d="M2 11C0 8 2 5.500 5 5.500c2 0 4 1 6 2.500l-7 5z" fill="#c4c5c6" />
            <path d="M16 5.500c3 0 5 2 5 4.200S19.500 13 17.500 13H5c-1.500 0-2.500-.5-3.300-1.500L11 8c1.500-1.800 3-2.500 5-2.500z" fill="#fff" />
          </svg>
        </button>
        <button aria-label="Battery" className="ml-5">
          <svg width="20" height="12" viewBox="0 0 20 12" aria-hidden="true">
            <path d="M.7.700h16.600v10.600H.7z" fill="none" stroke="#fff" strokeWidth="1.300" />
            <path d="M2.500 2.500h11.500v7H2.500zM18 4h1v4h-1z" fill="#fff" />
          </svg>
        </button>
        <button aria-label="Wi-Fi" className="ml-[22px]">
          <svg width="17" height="17" viewBox="0 0 17 17" fill="none" aria-hidden="true">
            <path d="M1 16C1 8 8 1 16 1" stroke="#999" strokeWidth="1.300" />
            <path d="M4.500 16C4.500 10 10 4.800 16 4.800M8 16c0-4 4-7.500 8-7.500M11.500 16c0-2 2-4 4.500-4" stroke="#ddd" strokeWidth="1.200" />
            <circle cx="14.500" cy="14.500" r="1.500" fill="#fff" />
          </svg>
        </button>
        <button aria-label="Volume" className="ml-[19px]">
          <svg width="21" height="18" viewBox="0 0 21 18" fill="none" stroke="#fff" strokeWidth="1.200" aria-hidden="true">
            <path d="M1 6h3l4.500-4v14L4 12H1zM11 6.500q1.500 2.500 0 5" />
            <path d="M14 4.500q3 4.500 0 9M17 2q4.500 7 0 14" stroke="#777" />
          </svg>
        </button>
        <button aria-label="Language" className="ml-[18px]">ENG</button>
        <button className="ml-[17px] flex w-[76px] flex-col items-center leading-[23px]">
          <span>1:09</span>
          <span>19/12/2020</span>
        </button>
        <button aria-label="Notifications" className="relative ml-[23px]">
          <svg width="20" height="20" viewBox="0 0 20 20" aria-hidden="true">
            <path d="M0 0h20v16H10l-3 3.500V16H0z" fill="#fff" />
            <path d="M4 4.500h12M4 8h12M4 11.500h7" stroke="#0a1519" strokeWidth="1.200" />
          </svg>
          <span className="absolute left-[9px] top-[9px] grid size-5 place-items-center rounded-full border border-[#7a7d7f] bg-[#23282c] text-[14px] leading-none">1</span>
        </button>
        <span className="ml-[25px] mr-[5px] h-full w-px bg-[#565b5e]" />
      </div>
    </div>
  );
}

export default function App() {
  return (
    <div className="flex min-h-screen flex-col bg-white font-['Open_Sans','Noto_Sans',sans-serif]">
      <TitleBar />
      <Tabs />
      <Ribbon />
      <AddressBar />
      <div className="flex min-h-0 flex-1">
        <NavPane />
        <Content />
      </div>
      <StatusBar />
      <Taskbar />
    </div>
  );
}
